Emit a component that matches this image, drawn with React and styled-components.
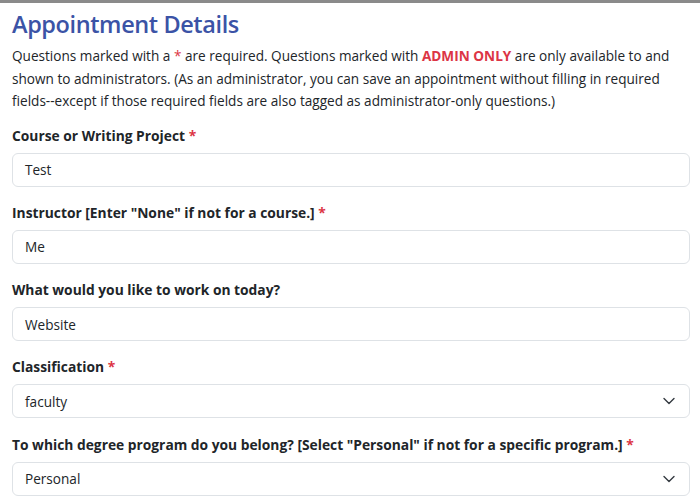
import React from "react";
import styled, { createGlobalStyle } from "styled-components";

const Global = createGlobalStyle`
  html, body { margin: 0; padding: 0; background: #fff; }
  body {
    font-family: "Open Sans", "Noto Sans", sans-serif;
    color: #212529;
    border-top: 3px solid #8a8a8a;
  }
  * { box-sizing: border-box; }
`;

const Page = styled.div`
  padding: 5px 10px 0 12px;
`;

const Title = styled.h1`
  margin: 0 0 5px;
  font-size: 23.5px;
  font-weight: 600;
  letter-spacing: -0.4px;
  line-height: 32px;
  color: #3b53a6;
`;

const Intro = styled.p`
  margin: 0 0 12px;
  font-size: 13.6px;
  line-height: 22.5px;
`;

const Req = styled.span`
  color: #dc3545;
`;

const Admin = styled.span`
  color: #dc3545;
  font-weight: 700;
`;

const Group = styled.div`
  margin-bottom: 15.25px;
`;

const Label = styled.label`
  display: block;
  font-size: 13.8px;
  font-weight: 700;
  line-height: 22px;
  margin-bottom: 6px;
`;

const Field = styled.div`
  position: relative;
  height: 34px;
  border: 1px solid #dee2e6;
  border-radius: 6px;
  padding: 0 12px;
  display: flex;
  align-items: center;
  font-size: 13.6px;
  background: #fff;
`;

const Chevron = styled.svg`
  position: absolute;
  right: 14px;
  top: 50%;
  transform: translateY(-50%);
`;

function Select({ value }) {
  return (
    <Field>
      {value}
      <Chevron width="12" height="8" viewBox="0 0 12 8">
        <path d="M1 1.5l5 5 5-5" fill="none" stroke="#343a40" strokeWidth="1.4" strokeLinecap="round" strokeLinejoin="round" />
      </Chevron>
    </Field>
  );
}

export default function App() {
  return (
    <>
      <Global />
      <Page>
        <Title>Appointment Details</Title>
        <Intro>
          Questions marked with a <Req>*</Req> are required. Questions marked with{" "}
          <Admin>ADMIN ONLY</Admin> are only available to and shown to administrators. (As an
          administrator, you can save an appointment without filling in required fields--except if
          those required fields are also tagged as administrator-only questions.)
        </Intro>
        <Group>
          <Label>Course or Writing Project <Req>*</Req></Label>
          <Field>Test</Field>
        </Group>
        <Group>
          <Label>Instructor [Enter "None" if not for a course.] <Req>*</Req></Label>
          <Field>Me</Field>
        </Group>
        <Group>
          <Label>What would you like to work on today?</Label>
          <Field>Website</Field>
        </Group>
        <Group>
          <Label>Classification <Req>*</Req></Label>
          <Select value="faculty" />
        </Group>
        <Group>
          <Label>To which degree program do you belong? [Select "Personal" if not for a specific program.] <Req>*</Req></Label>
          <Select value="Personal" />
        </Group>
      </Page>
    </>
  );
}
